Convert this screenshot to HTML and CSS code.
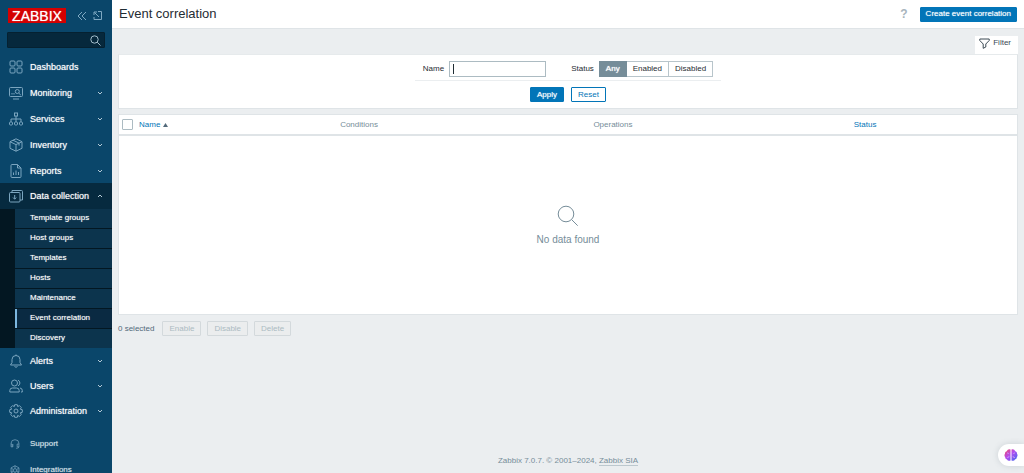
FILE: index.html
```html
<!DOCTYPE html>
<html lang="en">
<head>
<meta charset="utf-8">
<title>Event correlation</title>
<link rel="stylesheet" href="styles.css">
</head>
<body>
<aside class="sidebar">
  <div class="brand">
    <a class="logo" href="#">ZABBIX</a>
    <button class="icon-button" aria-label="Collapse sidebar"><svg width="10" height="10" viewBox="0 0 10 10"><path d="M5 1L1 5l4 4M9 1L5 5l4 4"/></svg></button>
    <button class="icon-button" aria-label="Hide sidebar"><svg width="9" height="9" viewBox="0 0 9 9"><path d="M5 .5h3.500v8H1V6M1.500 1.500l4.500 4.500M1 4V1h3"/></svg></button>
  </div>
  <form class="search">
    <input class="search-input" type="text" aria-label="Search">
    <button class="search-button" type="button" aria-label="Search"><svg width="11" height="11" viewBox="0 0 11 11"><circle cx="4.500" cy="4.500" r="3.700"/><path d="M7.200 7.200l3.300 3.300"/></svg></button>
  </form>
  <nav>
    <ul class="menu">
      <li><a class="item" href="#"><svg class="icon" viewBox="0 0 14 14"><rect x="1" y="1" width="5" height="5" rx="1"/><rect x="8" y="1" width="5" height="5" rx="1"/><rect x="1" y="8" width="5" height="5" rx="1"/><rect x="8" y="8" width="5" height="5" rx="1"/></svg><span>Dashboards</span></a></li>
      <li><a class="item" href="#"><svg class="icon" viewBox="0 0 14 14"><rect x=".5" y="1.500" width="13" height="9" rx="1"/><path d="M4 13h6M3 8.500V7M5 8.500V7M9.800 7.200l2 1.800"/><circle cx="8.300" cy="5.500" r="2"/></svg><span>Monitoring</span><svg class="chevron" viewBox="0 0 6 6"><path d="M1 2l2 2 2-2"/></svg></a></li>
      <li><a class="item" href="#"><svg class="icon" viewBox="0 0 14 14"><rect x="5.500" y="1" width="3" height="3"/><rect x=".5" y="10" width="3" height="3" rx="1"/><rect x="5.500" y="10" width="3" height="3" rx="1"/><rect x="10.500" y="10" width="3" height="3" rx="1"/><path d="M7 4v6M2 10V7h10v3"/></svg><span>Services</span><svg class="chevron" viewBox="0 0 6 6"><path d="M1 2l2 2 2-2"/></svg></a></li>
      <li><a class="item" href="#"><svg class="icon" viewBox="0 0 14 14"><path d="M7 .8l6 2.900v6.600l-6 2.900-6-2.900V3.700zM1 3.700l6 2.900 6-2.900M7 6.600v6.600M4 2.200l6 2.900v2.500"/></svg><span>Inventory</span><svg class="chevron" viewBox="0 0 6 6"><path d="M1 2l2 2 2-2"/></svg></a></li>
      <li><a class="item compact" href="#"><svg class="icon" viewBox="0 0 14 14"><path d="M2 1.500Q2 .5 3 .5h5.500l3.500 3.500v8.500q0 1-1 1H3q-1 0-1-1zM8.500.5V4H12M4.500 11V8.500M7 11V6.500M9.500 11V8"/></svg><span>Reports</span><svg class="chevron" viewBox="0 0 6 6"><path d="M1 2l2 2 2-2"/></svg></a></li>
      <li><a class="item open" href="#"><svg class="icon" viewBox="0 0 14 14"><rect x=".5" y="3.500" width="10.500" height="9.500" rx="1"/><path d="M3 3.500V1.500h9.500q1 0 1 1v8.500H11M5.700 6v4M4 8.500l1.700 1.700 1.700-1.700"/></svg><span>Data collection</span><svg class="chevron" viewBox="0 0 6 6"><path d="M1 4l2-2 2 2"/></svg></a>
        <ul class="submenu">
          <li><a class="subitem" href="#">Template groups</a></li>
          <li><a class="subitem" href="#">Host groups</a></li>
          <li><a class="subitem" href="#">Templates</a></li>
          <li><a class="subitem" href="#">Hosts</a></li>
          <li><a class="subitem" href="#">Maintenance</a></li>
          <li><a class="subitem current" href="#" aria-current="page">Event correlation</a></li>
          <li><a class="subitem" href="#">Discovery</a></li>
        </ul>
      </li>
      <li><a class="item compact" href="#"><svg class="icon" viewBox="0 0 14 14"><path d="M7 .5v1M1.500 11h11L11 8.500V5.500a4 4 0 0 0-8 0v3zM5.500 12.500q1.500 1.500 3 0"/></svg><span>Alerts</span><svg class="chevron" viewBox="0 0 6 6"><path d="M1 2l2 2 2-2"/></svg></a></li>
      <li><a class="item compact" href="#"><svg class="icon" viewBox="0 0 14 14"><circle cx="5.500" cy="4" r="3"/><path d="M.8 13v-1.500q0-2.500 2.700-2.500h4q2.700 0 2.700 2.500V13zM9 1.200a3 3 0 0 1 0 5.600M11 9q2.300.3 2.300 2.500V13H12"/></svg><span>Users</span><svg class="chevron" viewBox="0 0 6 6"><path d="M1 2l2 2 2-2"/></svg></a></li>
      <li><a class="item compact" href="#"><svg class="icon" viewBox="0 0 14 14"><circle cx="7" cy="7" r="2"/><path d="M5.700.7h2.600l.4 1.900 1.700-1 1.900 1.900-1 1.700 2 .5v2.600l-2 .5 1 1.700-1.900 1.900-1.700-1-.4 1.900H5.700l-.4-1.900-1.700 1-1.900-1.900 1-1.700-2-.5V5.700l2-.5-1-1.700 1.900-1.900 1.700 1z"/></svg><span>Administration</span><svg class="chevron" viewBox="0 0 6 6"><path d="M1 2l2 2 2-2"/></svg></a></li>
    </ul>
    <ul class="menu secondary">
      <li><a class="item small" href="#"><svg class="icon" viewBox="0 0 14 14"><path d="M3 11V7H1.500V6a5.500 5 0 0 1 11 0v5H10V7h2.500M1.500 7v4H4V7M12.500 11q0 2-4 2"/></svg><span>Support</span></a></li>
      <li><a class="item small" href="#"><svg class="icon" viewBox="0 0 14 14"><path d="M7 1l5.500 3v6L7 13l-5.500-3V4zM7 1v4M1.500 10L5 8M12.500 10L9 8M7 5l2.500 1.300v2.500L7 10 4.500 8.800V6.300zM7 10v3M1.500 4l3 2.300M12.500 4l-3 2.300"/></svg><span>Integrations</span></a></li>
    </ul>
  </nav>
</aside>
<div class="page">
  <header class="header">
    <h1 class="title">Event correlation</h1>
    <a class="help" href="#" aria-label="Help">?</a>
    <button class="button primary">Create event correlation</button>
  </header>
  <main class="content">
    <button class="filter-tab"><svg width="11" height="11" viewBox="0 0 11 11"><path d="M.8 1h9.400v1.500L6.800 6v3L4.200 10.300V6L.8 2.500z"/></svg>Filter</button>
    <form class="filter">
      <div class="fields">
        <label for="name">Name</label>
        <input class="name-input" id="name" type="text">
        <span class="status-label" id="status">Status</span>
        <div class="segments" role="radiogroup" aria-labelledby="status">
          <label class="segment"><input type="radio" name="status" checked><span>Any</span></label>
          <label class="segment"><input type="radio" name="status"><span>Enabled</span></label>
          <label class="segment"><input type="radio" name="status"><span>Disabled</span></label>
        </div>
      </div>
      <div class="filter-actions">
        <button class="button primary" type="button">Apply</button>
        <button class="button" type="reset">Reset</button>
      </div>
    </form>
    <section class="list">
      <table class="table">
        <thead><tr>
          <th class="col-check"><input class="check" type="checkbox" aria-label="Select all"></th>
          <th class="col-name"><a href="#">Name<svg class="sort" width="5" height="4" viewBox="0 0 5 4"><path d="M0 4l2.500-4L5 4z"/></svg></a></th>
          <th class="col-conditions">Conditions</th>
          <th class="col-operations">Operations</th>
          <th><a href="#">Status</a></th>
        </tr></thead>
      </table>
      <div class="empty">
        <svg width="22" height="22" viewBox="0 0 22 22"><circle cx="9" cy="9" r="7.800"/><path d="M14.700 14.700l6 6"/></svg>
        <p>No data found</p>
      </div>
    </section>
    <div class="bulk">
      <span class="selected">0 selected</span>
      <button class="button" disabled>Enable</button>
      <button class="button" disabled>Disable</button>
      <button class="button" disabled>Delete</button>
    </div>
  </main>
  <footer class="footer">Zabbix 7.0.7. © 2001–2024, <a href="#">Zabbix SIA</a></footer>
</div>
<button class="assistant" aria-label="Assistant"><svg width="14" height="14" viewBox="0 0 14 14"><defs><linearGradient id="brain" x1="0" y1="0" x2="1" y2="1"><stop offset="0" stop-color="#f4475c"/><stop offset=".45" stop-color="#b44df0"/><stop offset="1" stop-color="#3b6cf0"/></linearGradient></defs><path fill="url(#brain)" d="M6.500 1.500v11q-2.500 1-3.500-1-2-.5-1.800-2.300-1.400-1.700-.2-3.500-.2-2 1.700-2.500Q4 .5 6.500 1.500zM7.500 1.500v11q2.500 1 3.500-1 2-.5 1.800-2.300 1.400-1.700.2-3.500.2-2-1.700-2.500Q10 .5 7.500 1.500z"/><path d="M3 5q1.500-.5 1.500 1M3 9.500q2 .5 2-1.500M11 5q-1.500-.5-1.500 1M11 9.500q-2 .5-2-1.500" fill="none" stroke="#c88cf5"/></svg></button>
</body>
</html>
```
FILE: styles.css
```css
* { box-sizing: border-box; }
body {
  margin: 0;
  min-height: 100vh;
  display: flex;
  background: #ebeef0;
  color: #3c4a54;
  font: 8px/12px "Liberation Sans", Arial, sans-serif;
}
button, input { font: inherit; color: inherit; }
button { cursor: pointer; }
a { color: #0275b8; text-decoration: none; }
svg { flex: none; fill: none; stroke: currentColor; }
ul { list-style: none; margin: 0; padding: 0; }

.sidebar {
  width: 112px;
  height: 100vh;
  flex: none;
  position: sticky;
  top: 0;
  overflow: hidden;
  background: #0a466a;
  color: #fff;
}
.brand { display: flex; align-items: center; gap: 6px; padding: 8px 8px 0; }
.logo {
  width: 58px;
  height: 15px;
  margin-right: 5px;
  background: #d40000;
  color: #fff;
  font-size: 14px;
  line-height: 16px;
  text-align: center;
  text-shadow: 0 0 1px rgba(255, 255, 255, .7);
}
.icon-button { display: flex; padding: 0; border: 0; background: none; color: #7fa9c2; }
.search {
  display: flex;
  align-items: center;
  height: 16px;
  margin: 9px 7px 6px;
  padding-right: 3px;
  background: #06283c;
  border: 1px solid #052131;
  border-radius: 1px;
}
.search-input { flex: 1; min-width: 0; border: 0; padding: 0 4px; background: none; outline: 0; }
.search-button { display: flex; padding: 0; border: 0; background: none; color: #a3bdcb; }

.item {
  display: flex;
  align-items: center;
  height: 26px;
  padding: 0 9px;
  gap: 7px;
  color: #fff;
  font-size: 9px;
  text-shadow: 0 0 1px rgba(255, 255, 255, .7);
}
.item span { flex: 1; white-space: nowrap; }
.item.compact { height: 25px; }
.icon { width: 14px; height: 14px; color: #7ba5bf; }
.chevron { width: 6px; height: 6px; color: #b5cad6; }
.open { background: #062a3f; }
.submenu { display: grid; gap: 1px; padding-left: 15px; background: #031722; }
.subitem {
  display: block;
  padding: 3px 15px 4px;
  background: #0c344d;
  color: #fff;
  text-shadow: 0 0 1px rgba(255, 255, 255, .6);
}
.current { padding-left: 13px; border-left: 2px solid #7cb7df; background: #0a2a42; }
.secondary { margin-top: 8px; }
.small { padding: 0 10px; gap: 10px; font-size: 8px; color: #d5e2e9; text-shadow: 0 0 1px rgba(213, 226, 233, .6); }
.small .icon { width: 10px; height: 10px; }

.page { flex: 1; min-width: 0; display: flex; flex-direction: column; }
.header {
  display: flex;
  align-items: center;
  gap: 12px;
  height: 29px;
  padding: 0 7px;
  background: #fff;
  border-bottom: 1px solid #dfe4e7;
}
.title { flex: 1; margin: 0; font-size: 13px; line-height: 16px; font-weight: 400; color: #1f2c33; }
.help { color: #a8b5bd; font-size: 12px; font-weight: 700; }
.button {
  height: 15px;
  padding: 0 6px;
  background: #fff;
  border: 1px solid #0275b8;
  border-radius: 1px;
  color: #0275b8;
  line-height: 12px;
}
.primary { background: #0275b8; color: #fff; text-shadow: 0 0 1px rgba(255, 255, 255, .7); }
.header .button { padding: 0 5px; }
.button:disabled { background: #ebedee; border-color: #d3d9dc; color: #acbbc2; cursor: default; }

.content { flex: 1; display: flex; flex-direction: column; padding: 7px 6px 0; }
.filter-tab {
  display: flex;
  align-items: center;
  align-self: flex-end;
  gap: 3px;
  height: 18px;
  padding: 0 7px 4px 4px;
  border: 0;
  background: #fff;
}
.filter { padding: 6px; background: #fff; border: 1px solid #dfe4e7; border-top-color: #e6eaec; }
.fields {
  display: flex;
  align-items: center;
  justify-content: center;
  width: 306px;
  max-width: 100%;
  margin: 0 auto;
  padding-bottom: 3px;
  border-bottom: 1px solid #ebeef0;
  color: #1f2c33;
}
.name-input {
  width: 97px;
  height: 16px;
  margin: 0 25px 0 5px;
  padding: 0 3px;
  border: 1px solid #acbbc2;
  outline: 0;
  background: linear-gradient(#1f2c33, #1f2c33) 3px center / 1px 10px no-repeat #fff;
}
.segments { display: flex; margin-left: 5px; }
.segment { position: relative; }
.segment input { position: absolute; inset: 0; margin: 0; opacity: 0; }
.segment span {
  display: block;
  height: 16px;
  padding: 1px 6px;
  border: 1px solid #b8c5cb;
}
.segment + .segment span { border-left: 0; }
.segment input:checked + span { background: #768d99; border-color: #768d99; color: #fff; text-shadow: 0 0 1px #fff; }
.filter-actions { display: flex; justify-content: center; gap: 7px; padding: 6px 0 0; }

.list { display: flex; flex-direction: column; margin-top: 5px; background: #fff; border: 1px solid #dfe4e7; }
.table { width: 100%; table-layout: fixed; border-collapse: collapse; }
.table th {
  height: 20px;
  padding: 0 5px;
  border-bottom: 2px solid #dfe4e7;
  text-align: left;
  font-weight: 400;
  color: #768d99;
}
.table .col-check { width: 15px; padding: 0 0 0 3px; }
.col-name { width: 22.4%; }
.col-conditions { width: 28.2%; }
.col-operations { width: 29%; }
.check {
  display: block;
  appearance: none;
  width: 11px;
  height: 11px;
  margin: 0;
  border: 1px solid #acbbc2;
  border-radius: 1px;
  background: #fff;
}
.sort { margin-left: 3px; fill: #52697a; stroke: none; }
.empty {
  display: flex;
  flex-direction: column;
  align-items: center;
  gap: 7px;
  padding: 69px 0 68px;
  color: #768d99;
  font-size: 10px;
}
.empty p { margin: 0; }
.bulk { display: flex; align-items: center; gap: 6px; padding-top: 6px; color: #52697a; }
.selected { margin-right: 2px; }
.footer { padding: 0 0 6px; text-align: center; color: #768d99; }
.footer a { color: inherit; border-bottom: 1px solid #bcc8ce; }
.assistant {
  position: fixed;
  right: 0;
  bottom: 7px;
  display: flex;
  align-items: center;
  width: 26px;
  height: 22px;
  padding: 0 6px;
  border: 0;
  border-radius: 11px 0 0 11px;
  background: #fff;
  box-shadow: 0 0 6px rgba(80, 100, 110, .2);
}
.assistant svg { stroke: none; }
```
